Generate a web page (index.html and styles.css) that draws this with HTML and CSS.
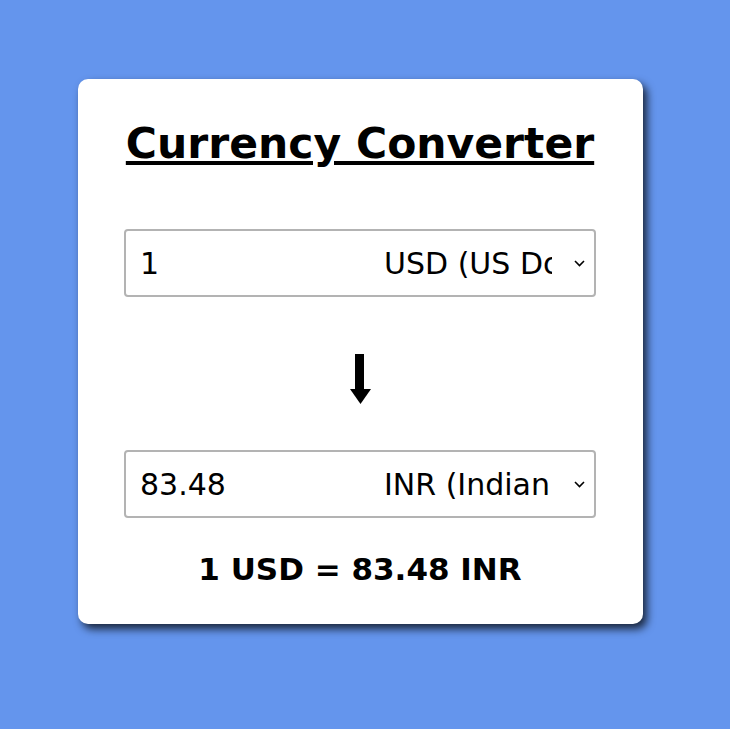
FILE: index.html
```html
<!DOCTYPE html>
<html>
<head>
<meta charset="utf-8">
<link rel="stylesheet" href="styles.css">
</head>
<body>
<div class="card">
  <h1 class="title">Currency Converter</h1>
  <div class="box">
    <input class="amount" type="text" value="1">
    <select class="cur"><option>USD (US Dollar)</option></select>
    <svg class="chev" width="11" height="7" viewBox="0 0 11 7"><polyline points="1,1 5.5,5.5 10,1" fill="none" stroke="#000" stroke-width="1.6"/></svg>
  </div>
  <div class="arrow">
    <svg width="22" height="52" viewBox="0 0 22 52"><rect x="5" y="0" width="9" height="36" fill="#000"/><polygon points="0,35 21,35 10.5,50" fill="#000"/></svg>
  </div>
  <div class="box">
    <input class="amount" type="text" value="83.48">
    <select class="cur"><option>INR (Indian Rupee)</option></select>
    <svg class="chev" width="11" height="7" viewBox="0 0 11 7"><polyline points="1,1 5.5,5.5 10,1" fill="none" stroke="#000" stroke-width="1.6"/></svg>
  </div>
  <p class="result">1 USD = 83.48 INR</p>
</div>
</body>
</html>
```
FILE: styles.css
```css
html, body { margin: 0; padding: 0; }
body {
  background: #6495ed;
  width: 730px;
  height: 729px;
  font-family: "DejaVu Sans", Verdana, sans-serif;
  padding: 79px 0 0 78px;
  box-sizing: border-box;
}
.card {
  width: 565px;
  height: 545px;
  background: #fff;
  border-radius: 10px;
  box-shadow: 4px 5px 9px rgba(0,0,0,0.75);
  box-sizing: border-box;
  padding: 0 47px 0 46px;
  display: flex;
  flex-direction: column;
  align-items: center;
}
.title {
  margin: 35px 0 0;
  font-size: 42.5px;
  font-weight: bold;
  text-decoration: underline;
  line-height: 60px;
  color: #000;
}
.box {
  width: 472px;
  height: 68px;
  box-sizing: border-box;
  border: 2px solid #b3b3b3;
  border-radius: 4px;
  display: flex;
  align-items: center;
  padding: 0 9px 0 14px;
}
.title + .box { margin-top: 55px; }
.amount {
  flex: 1;
  min-width: 0;
  border: none;
  outline: none;
  font-family: "DejaVu Sans", Verdana, sans-serif;
  font-size: 30px;
  padding: 0;
  color: #000;
  background: transparent;
}
.cur {
  -webkit-appearance: none;
  appearance: none;
  width: 168px;
  padding: 0;
  margin: 0 22px 0 0;
  border: none;
  outline: none;
  font-family: "DejaVu Sans", Verdana, sans-serif;
  font-size: 30px;
  color: #000;
  background: transparent;
}
.chev { display: block; flex: none; margin-top: 1px; }
.arrow {
  height: 153px;
  display: flex;
  align-items: center;
  justify-content: center;
}
.arrow svg { display: block; margin-left: 2px; margin-top: 12px; }
.result {
  margin: 33px 0 0;
  font-size: 31px;
  font-weight: bold;
  color: #000;
}
```
